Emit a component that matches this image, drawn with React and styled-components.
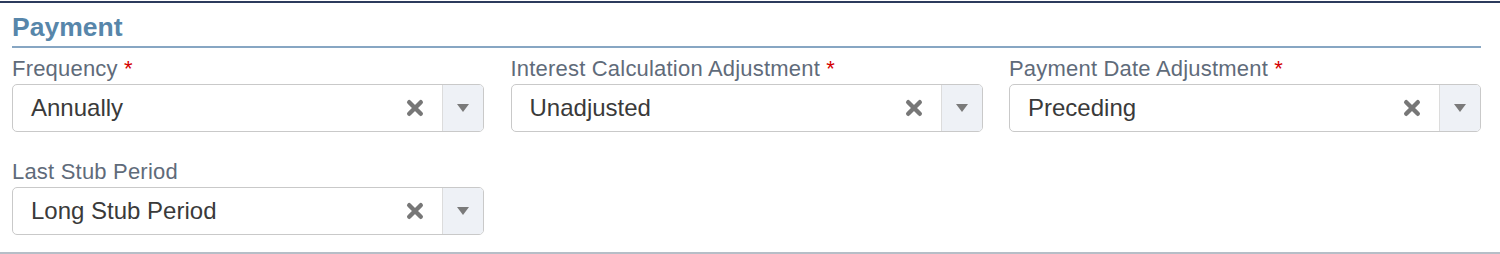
import styled, { createGlobalStyle } from 'styled-components';

const GlobalStyle = createGlobalStyle`
    html, body {
        margin: 0;
        padding: 0;
        background: #ffffff;
    }
    body {
        padding-top: 1px;
        font-family: "Liberation Sans", Arial, sans-serif;
    }
`;

const fields = [
    { label: 'Frequency', value: 'Annually', required: true },
    { label: 'Interest Calculation Adjustment', value: 'Unadjusted', required: true },
    { label: 'Payment Date Adjustment', value: 'Preceding', required: true },
    { label: 'Last Stub Period', value: 'Long Stub Period', required: false },
];

const ClearIcon = () => (
    <svg width='18' height='18' viewBox='0 0 18 18'>
        <path d='M3.2 3.2 L14.8 14.8 M14.8 3.2 L3.2 14.8' stroke='#777777' strokeWidth='4.4' strokeLinecap='round' />
    </svg>
);

const Caret = () => (
    <svg width='12' height='8' viewBox='0 0 12 8'>
        <path d='M0 0 L12 0 L6 8 Z' fill='#7a7a7a' />
    </svg>
);

const SelectField = ({ label, value, required }) => (
    <Field>
        <Label>
            {label}
            {required && <Required> *</Required>}
        </Label>
        <SelectBox>
            <SelectValue>{value}</SelectValue>
            <ClearButton><ClearIcon /></ClearButton>
            <ArrowZone><Caret /></ArrowZone>
        </SelectBox>
    </Field>
);

const App = () => {
    return (
        <>
            <GlobalStyle />
            <Section>
                <Heading>Payment</Heading>
                <FieldGrid>
                    {fields.map(f => (
                        <SelectField key={f.label} {...f} />
                    ))}
                </FieldGrid>
            </Section>
        </>
    );
};

const Section = styled.section`
    border-top: 2px solid #2c3b5d;
    border-bottom: 2px solid #b6bec7;
    padding: 9px 19px 17px 12px;
`;

const Heading = styled.h2`
    margin: 0;
    padding-bottom: 4px;
    border-bottom: 2px solid #87a6c3;
    font-size: 26.5px;
    line-height: 30px;
    font-weight: bold;
    color: #5786aa;
`;

const FieldGrid = styled.div`
    display: grid;
    grid-template-columns: repeat(3, 1fr);
    column-gap: 26.5px;
    row-gap: 27px;
    margin-top: 8px;
`;

const Field = styled.div`
    display: flex;
    flex-direction: column;
`;

const Label = styled.label`
    font-size: 22px;
    line-height: 26px;
    letter-spacing: 0.2px;
    color: #5f6b7a;
    margin-bottom: 2px;
    white-space: nowrap;
`;

const Required = styled.span`
    color: #d40000;
`;

const SelectBox = styled.div`
    display: flex;
    align-items: stretch;
    height: 48px;
    box-sizing: border-box;
    border: 1px solid #c9c9c9;
    border-radius: 5px;
    background: #ffffff;
    overflow: hidden;
`;

const SelectValue = styled.div`
    flex: 1;
    display: flex;
    align-items: center;
    padding-left: 18px;
    font-size: 24px;
    color: #3a3a3a;
    white-space: nowrap;
`;

const ClearButton = styled.div`
    display: flex;
    align-items: center;
    justify-content: center;
    width: 36px;
    margin-right: 9px;
`;

const ArrowZone = styled.div`
    display: flex;
    align-items: center;
    justify-content: center;
    width: 40px;
    border-left: 1px solid #dcdcdc;
    background: #eef1f6;
`;

export default App;
